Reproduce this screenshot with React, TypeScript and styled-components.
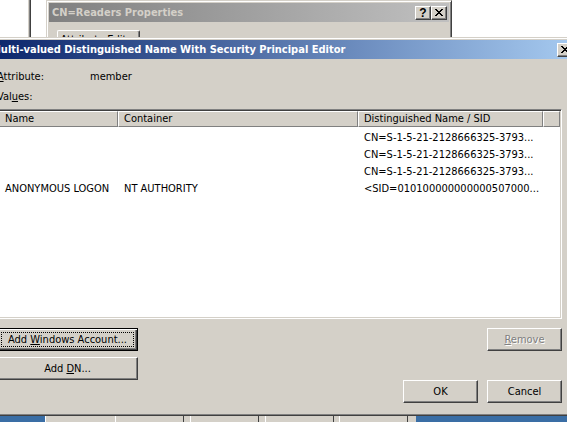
import React from "react";
import styled, { createGlobalStyle, css } from "styled-components";

const FACE = "#d4d0c8";
const SHADOW = "#808080";
const DARK = "#404040";

const GlobalStyle = createGlobalStyle`
  html, body { margin: 0; padding: 0; background: #ffffff; }
  #root { width: 567px; height: 422px; }
`;

const raisedFrame = css`
  box-sizing: border-box;
  background: ${FACE};
  border: 1px solid;
  border-color: ${FACE} ${DARK} ${DARK} ${FACE};
  box-shadow: inset 1px 1px 0 #fff, inset -1px -1px 0 ${SHADOW};
  padding: 2px;
`;

const Screen = styled.div`
  width: 567px;
  height: 422px;
  overflow: hidden;
  display: flex;
  flex-direction: column;
  background: #fff;
  font-family: "DejaVu Sans Condensed", "DejaVu Sans", "Liberation Sans", sans-serif;
  font-stretch: condensed;
  font-size: 11px;
  color: #000;
`;

const Desktop = styled.div`
  position: relative;
  height: 37px;
  flex-shrink: 0;
  overflow: hidden;
`;

const SideWindow = styled.div`
  position: absolute;
  left: -200px;
  top: 0;
  width: 231px;
  height: 37px;
  box-sizing: border-box;
  background: #fff;
  border-right: 1px solid ${DARK};
  box-shadow: inset -1px 0 0 ${SHADOW}, inset -2px 0 0 ${FACE};
`;

const BackWindow = styled.div`
  ${raisedFrame};
  position: absolute;
  left: 46px;
  top: 0;
  width: 406px;
  height: 80px;
  display: flex;
  flex-direction: column;
`;

const TitleBar = styled.div<{ $active?: boolean }>`
  height: 19px;
  flex-shrink: 0;
  display: flex;
  align-items: center;
  padding: 0 2px 0 3px;
  background: ${(p) =>
    p.$active
      ? "linear-gradient(to right, #0a246a, #a6caf0)"
      : "linear-gradient(to right, #808080, #c0c0c0)"};
  color: ${(p) => (p.$active ? "#fff" : FACE)};
  font-weight: bold;
  font-size: 11px;
`;

const TitleText = styled.span`
  flex: 1;
  white-space: nowrap;
  overflow: hidden;
`;

const CaptionButton = styled.div`
  box-sizing: border-box;
  width: 16px;
  height: 14px;
  flex-shrink: 0;
  background: ${FACE};
  border: 1px solid;
  border-color: #fff ${DARK} ${DARK} #fff;
  box-shadow: inset -1px -1px 0 ${SHADOW};
  display: flex;
  align-items: center;
  justify-content: center;
  color: #000;
  font-family: "Liberation Sans", sans-serif;
  font-weight: bold;
  font-size: 12px;
  line-height: 12px;
`;

const BackBody = styled.div`
  padding: 8px 0 0 8px;
`;

const Tab = styled.div`
  box-sizing: border-box;
  width: 83px;
  height: 20px;
  border: 1px solid;
  border-color: #fff ${DARK} transparent #fff;
  border-radius: 2px 2px 0 0;
  box-shadow: inset -1px 0 0 ${SHADOW};
  padding-top: 2px;
  text-align: center;
  white-space: nowrap;
  overflow: hidden;
`;

const Dialog = styled.div`
  ${raisedFrame};
  width: 593px;
  height: 379px;
  margin-left: -15px;
  flex-shrink: 0;
  display: flex;
  flex-direction: column;
`;

const DialogBody = styled.div`
  flex: 1;
  display: flex;
  flex-direction: column;
  padding: 11px 13px 10px 9px;
`;

const FieldRow = styled.div<{ $gap?: number }>`
  display: flex;
  height: 13px;
  line-height: 13px;
  margin-top: ${(p) => p.$gap ?? 0}px;
  white-space: nowrap;
`;

const FieldLabel = styled.span`
  width: 93px;
  flex-shrink: 0;
`;

const ListView = styled.div`
  box-sizing: border-box;
  margin-top: 6px;
  height: 210px;
  background: #fff;
  border: 1px solid;
  border-color: ${SHADOW} #fff #fff ${SHADOW};
  box-shadow: inset 1px 1px 0 ${DARK}, inset -1px -1px 0 ${FACE};
  padding: 1px;
  overflow: hidden;
`;

const HeaderRow = styled.div`
  display: flex;
  height: 16px;
`;

const HeaderCell = styled.div<{ $w?: number }>`
  box-sizing: border-box;
  ${(p) => (p.$w ? `width: ${p.$w}px; flex-shrink: 0;` : "flex: 1;")}
  height: 16px;
  background: ${FACE};
  border: 1px solid;
  border-color: #fff ${SHADOW} ${SHADOW} #fff;
  padding-left: 5px;
  line-height: 14px;
  white-space: nowrap;
  overflow: hidden;
`;

const Rows = styled.div`
  padding-top: 2px;
`;

const Row = styled.div`
  display: flex;
  height: 17px;
  line-height: 17px;
`;

const Cell = styled.div<{ $w: number }>`
  box-sizing: border-box;
  width: ${(p) => p.$w}px;
  flex-shrink: 0;
  padding-left: 6px;
  white-space: nowrap;
  overflow: hidden;
`;

const ButtonArea = styled.div`
  margin-top: 9px;
  display: grid;
  grid-template-columns: 141px 1fr 75px 75px;
  grid-template-rows: 23px 6px 23px 23px;
  column-gap: 9px;
  grid-template-areas:
    "win . . remove"
    ". . . ."
    "dn . . ."
    ". . ok cancel";
`;

const PushButton = styled.button<{ $area: string; $default?: boolean }>`
  grid-area: ${(p) => p.$area};
  position: relative;
  box-sizing: border-box;
  height: 23px;
  margin: 0;
  padding: 0;
  font: inherit;
  color: #000;
  background: ${FACE};
  border: 1px solid;
  border-color: #fff ${DARK} ${DARK} #fff;
  box-shadow: inset -1px -1px 0 ${SHADOW};
  white-space: nowrap;
  ${(p) =>
    p.$default &&
    css`
      border-color: #000;
      box-shadow: inset 1px 1px 0 #fff, inset -1px -1px 0 ${DARK}, inset -2px -2px 0 ${SHADOW};
      &::after {
        content: "";
        position: absolute;
        inset: 3px;
        border: 1px dotted #000;
      }
    `}
  &:disabled {
    color: ${SHADOW};
    text-shadow: 1px 1px 0 #fff;
  }
`;

const Strip = styled.div`
  height: 6px;
  flex-shrink: 0;
  display: flex;
  background: ${FACE};
`;

const StripSeg = styled.div<{ $w?: number; $kind: "blue" | "button" | "plain"; $edge?: boolean }>`
  box-sizing: border-box;
  ${(p) => (p.$w ? `width: ${p.$w}px; flex-shrink: 0;` : "flex: 1;")}
  background: ${(p) => (p.$kind === "blue" ? "#3a6ea5" : FACE)};
  ${(p) => p.$kind === "button" && `border-left: 1px solid #fff;`}
  ${(p) => p.$edge && `border-right: 1px solid ${DARK};`}
`;

const CloseGlyph = () => (
  <svg width="8" height="7" viewBox="0 0 8 7" shapeRendering="crispEdges">
    <path
      fill="#000"
      d="M0 0h2v1H0z M6 0h2v1H6z M1 1h2v1H1z M5 1h2v1H5z M2 2h4v1H2z M3 3h2v1H3z M2 4h4v1H2z M1 5h2v1H1z M5 5h2v1H5z M0 6h2v1H0z M6 6h2v1H6z"
    />
  </svg>
);

const COLS = [119, 240, 185];

const rows: [string, string, string][] = [
  ["", "", "CN=S-1-5-21-2128666325-3793..."],
  ["", "", "CN=S-1-5-21-2128666325-3793..."],
  ["", "", "CN=S-1-5-21-2128666325-3793..."],
  ["ANONYMOUS LOGON", "NT AUTHORITY", "<SID=010100000000000507000..."],
];

export default function App() {
  return (
    <>
      <GlobalStyle />
      <Screen>
        <Desktop>
          <SideWindow />
          <BackWindow>
            <TitleBar>
              <TitleText>CN=Readers Properties</TitleText>
              <CaptionButton>?</CaptionButton>
              <CaptionButton>
                <CloseGlyph />
              </CaptionButton>
            </TitleBar>
            <BackBody>
              <Tab>Attribute Editor</Tab>
            </BackBody>
          </BackWindow>
        </Desktop>
        <Dialog>
          <TitleBar $active>
            <TitleText>Multi-valued Distinguished Name With Security Principal Editor</TitleText>
            <CaptionButton>
              <CloseGlyph />
            </CaptionButton>
          </TitleBar>
          <DialogBody>
            <FieldRow>
              <FieldLabel>
                <u>A</u>ttribute:
              </FieldLabel>
              <span>member</span>
            </FieldRow>
            <FieldRow $gap={7}>
              <FieldLabel>
                Val<u>u</u>es:
              </FieldLabel>
            </FieldRow>
            <ListView>
              <HeaderRow>
                <HeaderCell $w={COLS[0]}>Name</HeaderCell>
                <HeaderCell $w={COLS[1]}>Container</HeaderCell>
                <HeaderCell $w={COLS[2]}>Distinguished Name / SID</HeaderCell>
                <HeaderCell />
              </HeaderRow>
              <Rows>
                {rows.map((r, i) => (
                  <Row key={i}>
                    {r.map((c, j) => (
                      <Cell key={j} $w={COLS[j]}>
                        {c}
                      </Cell>
                    ))}
                  </Row>
                ))}
              </Rows>
            </ListView>
            <ButtonArea>
              <PushButton $area="win" $default>
                Add <u>W</u>indows Account...
              </PushButton>
              <PushButton $area="remove" disabled>
                <u>R</u>emove
              </PushButton>
              <PushButton $area="dn">
                Add <u>D</u>N...
              </PushButton>
              <PushButton $area="ok">OK</PushButton>
              <PushButton $area="cancel">Cancel</PushButton>
            </ButtonArea>
          </DialogBody>
        </Dialog>
        <Strip>
          <StripSeg $kind="blue" $w={45} />
          <StripSeg $kind="button" $w={70} />
          <StripSeg $kind="button" $w={69} $edge />
          <StripSeg $kind="plain" $w={6} />
          <StripSeg $kind="button" $w={69} $edge />
          <StripSeg $kind="plain" $w={6} />
          <StripSeg $kind="button" $w={69} $edge />
          <StripSeg $kind="plain" $w={5} />
          <StripSeg $kind="button" $w={69} $edge />
          <StripSeg $kind="plain" $w={8} />
          <StripSeg $kind="blue" />
        </Strip>
      </Screen>
    </>
  );
}
